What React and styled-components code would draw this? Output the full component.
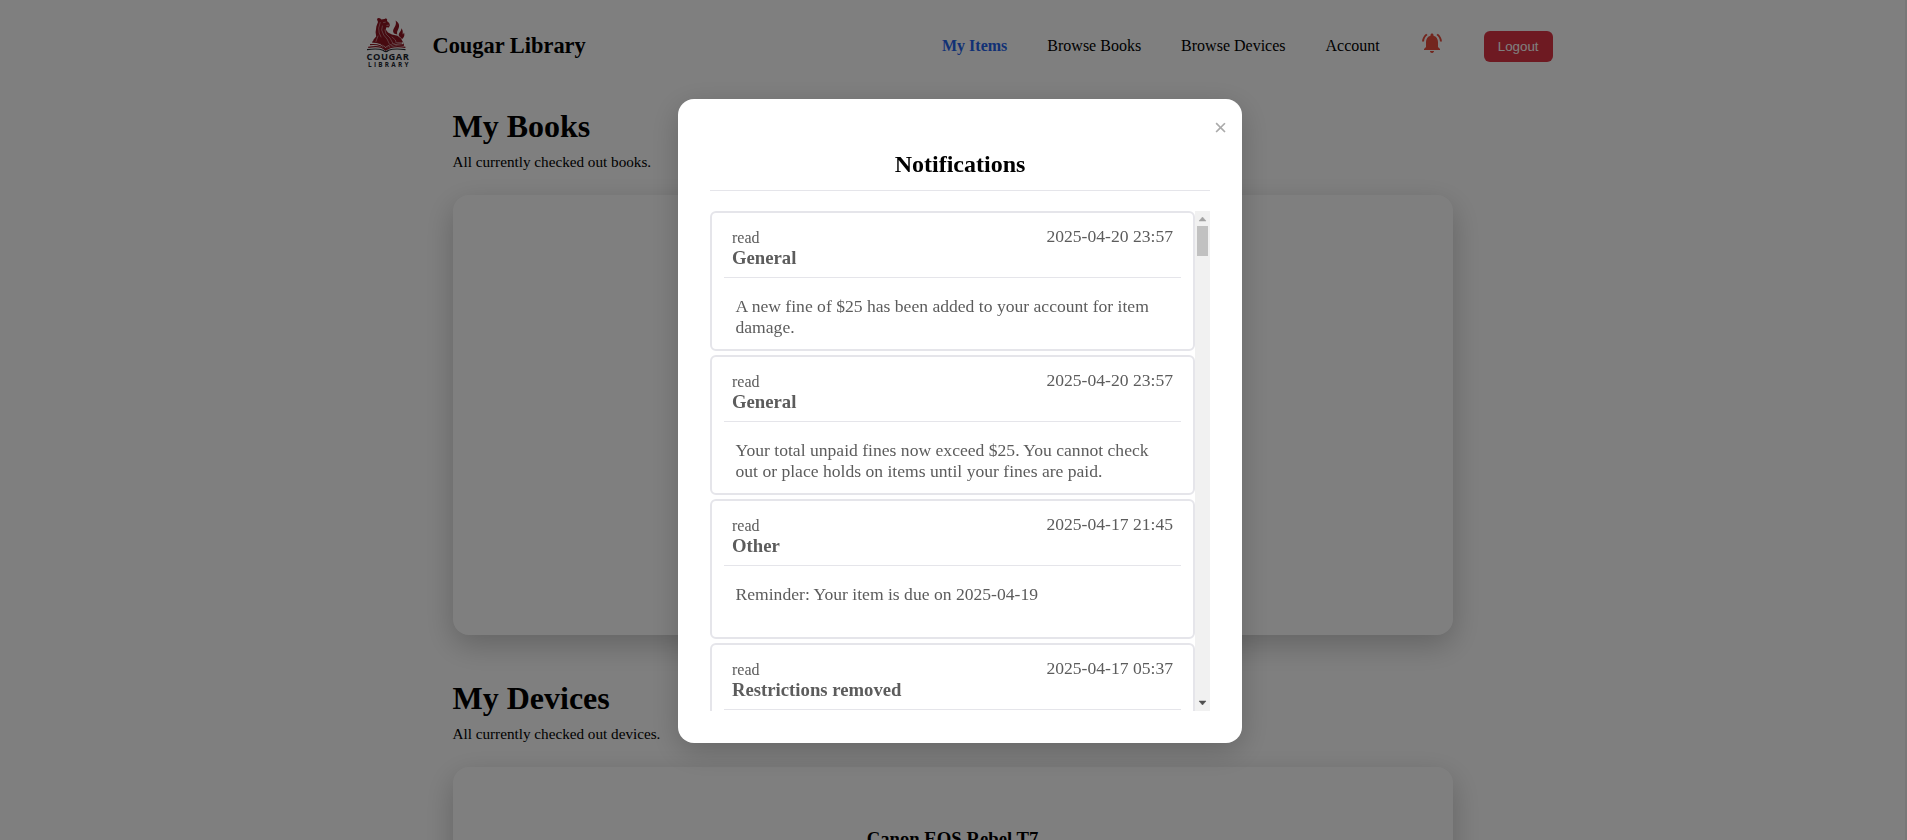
import React from 'react';
import styled, { createGlobalStyle } from 'styled-components';
import { MdNotificationsActive } from 'react-icons/md';

const GlobalStyle = createGlobalStyle`
  * { box-sizing: border-box; }
  html, body { margin: 0; height: 840px; overflow: hidden; background: #fff; }
  body { font-family: "Liberation Serif", "Times New Roman", serif; font-size: 16px; color: #000; }
  h1, h2, h3, p { margin: 0; }
`;

const Page = styled.div`
  height: 840px;
  overflow: hidden;
  border-right: 2px solid #f1f1f1;
`;

const Header = styled.header`
  display: flex;
  align-items: center;
  justify-content: space-between;
  width: 1200px;
  height: 90px;
  margin: 0 auto;
`;

const Brand = styled.div`
  display: flex;
  align-items: center;
  gap: 10px;
`;

const LogoArt = styled.svg`
  display: block;
  width: 70px;
  height: 70px;
`;

const BrandName = styled.h1`
  padding-top: 2px;
  font-size: 22.4px;
  line-height: 26px;
`;

const Nav = styled.nav`
  display: flex;
  align-items: center;
  gap: 40px;
  padding-top: 2px;
`;

const NavLink = styled.a`
  line-height: 18px;
  color: ${(p) => (p.$active ? '#2563eb' : '#000')};
  font-weight: ${(p) => (p.$active ? 700 : 400)};
`;

const Bell = styled(MdNotificationsActive)`
  width: 24px;
  height: 24px;
  margin-bottom: 6px;
  color: #e74c3c;
`;

const LogoutButton = styled.button`
  padding: 8px 14px;
  border: 0;
  border-radius: 6px;
  background: #dc3545;
  color: #fff;
  font: 13.333px/15px "Liberation Sans", Arial, sans-serif;
`;

const Main = styled.main`
  width: 1000px;
  margin: 0 auto;
  padding-top: 18px;
`;

const Section = styled.section`
  margin-bottom: 45px;
`;

const SectionTitle = styled.h1`
  font-size: 32px;
  line-height: 37px;
`;

const SectionText = styled.p`
  margin-top: 8px;
  font-size: 15.2px;
  line-height: 17px;
`;

const Panel = styled.div`
  height: 440px;
  margin-top: 25px;
  padding-top: 61px;
  border-radius: 16px;
  background: #fff;
  box-shadow: 0 10px 30px rgba(0, 0, 0, 0.22);
  text-align: center;
`;

const ItemTitle = styled.h3`
  font-size: 18.72px;
  line-height: 22px;
`;

const Overlay = styled.div`
  position: fixed;
  inset: 0;
  display: flex;
  align-items: flex-start;
  justify-content: center;
  padding: 99px 0 0 13px;
  background: rgba(0, 0, 0, 0.5);
`;

const Dialog = styled.div`
  position: relative;
  width: 564px;
  height: 644px;
  padding: 52px 32px 32px;
  border-radius: 16px;
  background: #fff;
  box-shadow: 0 8px 30px rgba(0, 0, 0, 0.2);
`;

const CloseButton = styled.button`
  position: absolute;
  top: 15px;
  right: 15px;
  padding: 0;
  border: 0;
  background: none;
  color: #aaa;
  font: 22.4px/28px "Liberation Sans", Arial, sans-serif;
`;

const DialogTitle = styled.h2`
  height: 40px;
  margin-bottom: 20px;
  border-bottom: 1px solid #e5e5ea;
  font-size: 24px;
  line-height: 27px;
  text-align: center;
`;

const ListFrame = styled.div`
  display: flex;
  height: 500px;
`;

const List = styled.div`
  display: flex;
  flex: 1;
  flex-direction: column;
  gap: 4px;
  overflow: hidden;
`;

const Card = styled.article`
  flex: none;
  height: 140px;
  padding: 12px;
  border: 2px solid #e5e5ea;
  border-radius: 6px;
  color: #5c5c5c;
`;

const CardHeader = styled.div`
  display: flex;
  justify-content: space-between;
  height: 53px;
  padding: 1px 8px 0;
  border-bottom: 1px solid #e5e5ea;
`;

const Status = styled.p`
  padding-top: 3px;
  line-height: 18px;
`;

const Kind = styled.h3`
  font-size: 18.72px;
  line-height: 22px;
`;

const Stamp = styled.time`
  font-size: 17.6px;
  line-height: 20px;
`;

const Message = styled.p`
  padding: 18px 12px 0 11.5px;
  font-size: 17.6px;
  line-height: 21px;
`;

const Scrollbar = styled.div`
  display: flex;
  flex-direction: column;
  align-items: center;
  width: 15px;
  background: #f1f1f1;
`;

const Thumb = styled.div`
  width: 11px;
  height: 30px;
  margin-bottom: auto;
  background: #c1c1c1;
`;

const Arrow = styled.svg`
  display: block;
  width: 15px;
  height: 15px;
  fill: ${(p) => p.$color};
  stroke: ${(p) => p.$color};
  stroke-width: 0.5px;
`;

const notifications = [
  { kind: 'General', time: '2025-04-20 23:57', text: 'A new fine of $25 has been added to your account for item damage.' },
  { kind: 'General', time: '2025-04-20 23:57', text: 'Your total unpaid fines now exceed $25. You cannot check out or place holds on items until your fines are paid.' },
  { kind: 'Other', time: '2025-04-17 21:45', text: 'Reminder: Your item is due on 2025-04-19' },
  { kind: 'Restrictions removed', time: '2025-04-17 05:37', text: '' },
];

function Logo() {
  return (
    <LogoArt viewBox="0 0 70 70">
      <g fill="#8e1420">
        <path d="M24 9.5 L24.8 8 L27 8.2 L28.4 9.4 L31.5 9 L33 8.2 L34.2 9.6 L34 11 L36.2 13 L37 15.2 L35.8 17.4 L33.4 17.2 L32.7 19.5 L35 22.5 L39 24.5 L44.5 25.8 L48 28.5 L50.2 32.5 L50.8 36 L43 35.6 L38 36.4 L33 39 L27 35.4 L19 34 L20.6 29.5 L23.2 26.4 L22.6 22.2 L23.4 16.2 L25 12Z" />
        <path d="M41 23.5 C38.7 20.5 41.5 18 42.5 15.3 C43.2 13.4 43 12 42.5 10.5 C46.5 13 46.7 16 45.4 18.7 C44.4 20.7 43.7 22 44.3 24.6Z" />
        <path d="M46 26 C44.7 23 48.5 21.5 48.4 18.2 C50.6 21 49.3 23.2 50 24.5 L51 22.4 C52.2 26 50.2 28 49 29Z" />
      </g>
      <g fill="none" stroke="#fff" strokeOpacity=".7" strokeWidth=".6" strokeLinecap="round">
        <path d="M30.5 12.6 L32.4 12.2 M33.8 15.4 L36 15.2 M27.2 12.5 L25.7 18 L26.2 23 L28 27 M29.4 16 L28.7 20 L30.7 25 L34 29 L36.4 34 M32 20 L33 24 L37 28 L40 33.6 M25 26 L22.6 32.4 M39 27 L42.4 30 L43.5 34" />
      </g>
      <path d="M17 33.2 Q28 33 32.5 39 Q38 33.5 50 33.5" fill="none" stroke="#fff" strokeWidth="2.6" />
      <g fill="none" stroke="#8e1420" strokeWidth="1.15">
        <path d="M19 32 Q29 32 32.5 38.7 Q38 33 49 33" />
        <path d="M17 34.6 Q28 33.6 32.5 39.5 Q39 34 51 34.9" />
        <path d="M15.2 37.4 Q28 34.8 32.5 40.2 Q39.5 35 52.4 37.4" />
      </g>
      <path d="M14 39.6 Q25 38.2 30 40.2 Q32.5 43 35.5 40.2 Q41 38.2 52.5 39.6" fill="none" stroke="#27292f" strokeWidth="1.2" />
      <text x="13.4" y="49.9" textLength="42.5" fill="#20242d" fontFamily="Open Sans, sans-serif" fontSize="9.3" fontWeight="700">COUGAR</text>
      <text x="15" y="56.6" textLength="40.5" fill="#20242d" fontFamily="Open Sans, sans-serif" fontSize="6.4" fontWeight="700">LIBRARY</text>
    </LogoArt>
  );
}

export default function App() {
  return (
    <>
      <GlobalStyle />
      <Page>
        <Header>
          <Brand>
            <Logo />
            <BrandName>Cougar Library</BrandName>
          </Brand>
          <Nav>
            <NavLink $active>My Items</NavLink>
            <NavLink>Browse Books</NavLink>
            <NavLink>Browse Devices</NavLink>
            <NavLink>Account</NavLink>
            <Bell />
            <LogoutButton>Logout</LogoutButton>
          </Nav>
        </Header>
        <Main>
          <Section>
            <SectionTitle>My Books</SectionTitle>
            <SectionText>All currently checked out books.</SectionText>
            <Panel />
          </Section>
          <Section>
            <SectionTitle>My Devices</SectionTitle>
            <SectionText>All currently checked out devices.</SectionText>
            <Panel>
              <ItemTitle>Canon EOS Rebel T7</ItemTitle>
            </Panel>
          </Section>
        </Main>
      </Page>
      <Overlay>
        <Dialog role="dialog">
          <CloseButton>×</CloseButton>
          <DialogTitle>Notifications</DialogTitle>
          <ListFrame>
            <List>
              {notifications.map((n, i) => (
                <Card key={i}>
                  <CardHeader>
                    <div>
                      <Status>read</Status>
                      <Kind>{n.kind}</Kind>
                    </div>
                    <Stamp>{n.time}</Stamp>
                  </CardHeader>
                  <Message>{n.text}</Message>
                </Card>
              ))}
            </List>
            <Scrollbar>
              <Arrow viewBox="0 0 15 15" $color="#a3a3a3"><path d="M4 10 L7.5 6 L11 10Z" /></Arrow>
              <Thumb />
              <Arrow viewBox="0 0 15 15" $color="#505050"><path d="M4 5 L7.5 9 L11 5Z" /></Arrow>
            </Scrollbar>
          </ListFrame>
        </Dialog>
      </Overlay>
    </>
  );
}
